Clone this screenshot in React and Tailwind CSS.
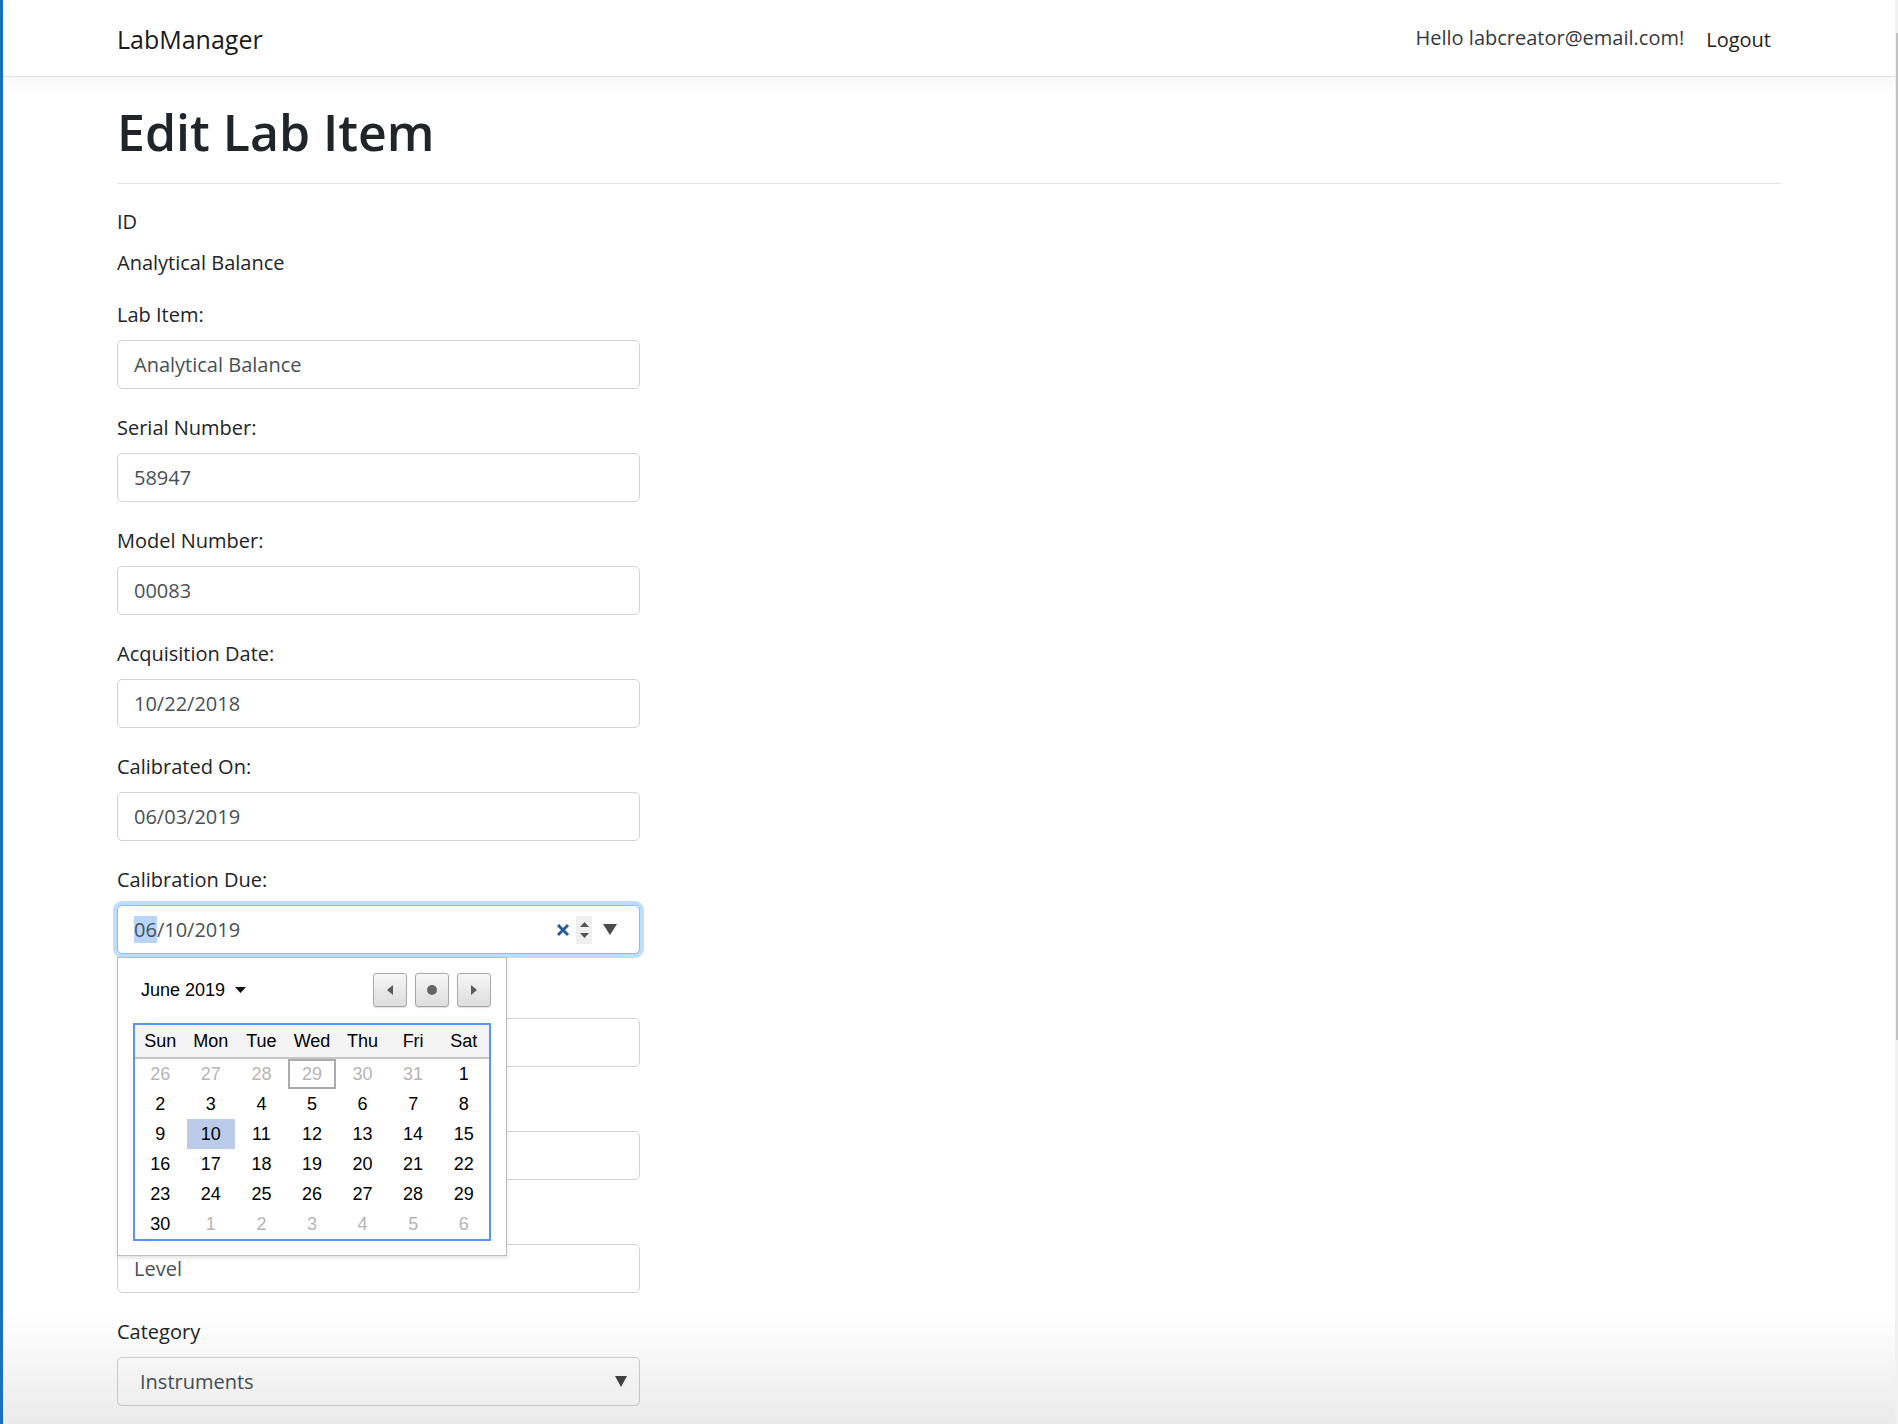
import React from "react";

const dayNames = ["Sun", "Mon", "Tue", "Wed", "Thu", "Fri", "Sat"];

const buildDays = () => {
  const days = [];
  [26, 27, 28, 29, 30, 31].forEach((d) => days.push({ d, muted: true, boxed: d === 29 }));
  for (let d = 1; d <= 30; d++) days.push({ d, muted: false, selected: d === 10 });
  [1, 2, 3, 4, 5, 6].forEach((d) => days.push({ d, muted: true }));
  return days;
};

// labels/values that sit under the open date popup are not visible, so they stay empty
const FormGroup = ({ label, value, children }) => (
  <div className="mb-[24px]">
    <label className="block h-[30px] text-[20px] leading-[30px] mb-[10px]">{label}</label>
    {children || (
      <div className="flex h-[49px] w-[523px] items-center rounded-[5px] border border-[#ced4da] bg-white px-[16px] text-[20px] text-[#495057]">
        {value}
      </div>
    )}
  </div>
);

const NavButton = ({ children }) => (
  <button className="flex h-[34px] w-[34px] items-center justify-center rounded-[3px] border border-[#a8a8a8] bg-linear-to-b from-[#f7f7f7] to-[#dddddd] shadow-[0_1px_1px_rgba(0,0,0,0.12)]">
    {children}
  </button>
);

const DatePopup = () => {
  const days = buildDays();
  return (
    <div className="absolute left-0 top-[52px] z-10 w-[390px] border border-[#bdbdbd] bg-white px-[15px] pt-[15px] pb-[14px] font-['Liberation_Sans',Arial,sans-serif] text-black shadow-[0_2px_4px_rgba(0,0,0,0.12)]">
      <div className="flex h-[34px] items-center justify-between">
        <div className="flex items-center gap-[10px] pl-[8px] text-[18px]">
          June 2019
          <svg width="11" height="6" viewBox="0 0 11 6">
            <path d="M0 0 H11 L5.5 6 Z" fill="#111" />
          </svg>
        </div>
        <div className="flex gap-[8px]">
          <NavButton>
            <svg width="6" height="10" viewBox="0 0 6 10">
              <path d="M6 0 V10 L0 5 Z" fill="#5c5c5c" />
            </svg>
          </NavButton>
          <NavButton>
            <span className="block h-[10px] w-[10px] rounded-full bg-[#666]" />
          </NavButton>
          <NavButton>
            <svg width="6" height="10" viewBox="0 0 6 10">
              <path d="M0 0 V10 L6 5 Z" fill="#5c5c5c" />
            </svg>
          </NavButton>
        </div>
      </div>
      <div className="mt-[16px] border-2 border-[#5b93f5]">
        <div className="grid h-[34px] grid-cols-7 items-center border-b-2 border-[#c6c6c6] bg-[#f4f4f4] text-center text-[18px]">
          {dayNames.map((n) => (
            <span key={n}>{n}</span>
          ))}
        </div>
        <div className="grid grid-cols-7 text-center text-[18px]">
          {days.map((day, i) => (
            <div key={i} className="flex h-[30px] items-center justify-center px-[1px]">
              <span
                className={
                  "flex h-full w-full items-center justify-center " +
                  (day.muted ? "text-[#b5b5b5] " : "text-black ") +
                  (day.selected ? "bg-[#bccbe9] " : "") +
                  (day.boxed ? "border-2 border-[#ababab] " : "")
                }
              >
                {day.d}
              </span>
            </div>
          ))}
        </div>
      </div>
    </div>
  );
};

const App = () => {
  return (
    <div className="flex min-h-[1424px] bg-white font-['Open_Sans',sans-serif] text-[#212529]">
      <div className="w-[3px] shrink-0 bg-[#1b6fc4]" />

      <div className="flex-1">
        <nav className="flex h-[77px] items-center justify-between border-b border-[#dee2e6] bg-white px-[114px] shadow-[0_5px_15px_rgba(0,0,0,0.05)]">
          <a className="pt-[4px] text-[25px] text-[#1a1a1a]">LabManager</a>
          <div className="flex items-center">
            <span className="text-[20px] text-[#343a40]">Hello labcreator@email.com!</span>
            <a className="ml-[22px] pt-[4px] pr-[10px] text-[20px] text-[#222]">Logout</a>
          </div>
        </nav>

        <main className="px-[114px] pt-[25px]">
          <h1 className="h-[60px] text-[50px] font-semibold leading-[60px]">Edit Lab Item</h1>
          <hr className="mt-[21px] border-t border-[#e5e5e5]" />

          <div className="mt-[23px] h-[30px] text-[20px] leading-[30px]">ID</div>
          <div className="mt-[11px] mb-[22px] h-[30px] text-[20px] leading-[30px]">Analytical Balance</div>

          <div className="w-[523px]">
            <FormGroup label="Lab Item:" value="Analytical Balance" />
            <FormGroup label="Serial Number:" value="58947" />
            <FormGroup label="Model Number:" value="00083" />
            <FormGroup label="Acquisition Date:" value="10/22/2018" />
            <FormGroup label="Calibrated On:" value="06/03/2019" />
            <FormGroup label="Calibration Due:">
              <div className="relative">
                <div className="flex h-[49px] w-[523px] items-center rounded-[5px] border border-[#80bdff] bg-white pl-[16px] pr-[22px] text-[20px] text-[#495057] shadow-[0_0_0_4px_rgba(0,123,255,0.25)]">
                  <span className="flex-1 leading-[27px]">
                    <span className="bg-[#b8d5f8]">06</span>/10/2019
                  </span>
                  <svg width="14" height="14" viewBox="0 0 14 14" className="mr-[6px]">
                    <path d="M2 2 L12 12 M12 2 L2 12" stroke="#2c5b9c" strokeWidth="3" />
                  </svg>
                  <div className="flex h-[28px] w-[16px] flex-col items-center justify-center gap-[6px] bg-[#efefef]">
                    <svg width="9" height="5" viewBox="0 0 9 5">
                      <path d="M0 5 H9 L4.5 0 Z" fill="#555" />
                    </svg>
                    <svg width="9" height="5" viewBox="0 0 9 5">
                      <path d="M0 0 H9 L4.5 5 Z" fill="#555" />
                    </svg>
                  </div>
                  <svg width="14" height="11" viewBox="0 0 14 11" className="ml-[11px]">
                    <path d="M0 0 H14 L7 11 Z" fill="#4a4a4a" />
                  </svg>
                </div>
                <DatePopup />
              </div>
            </FormGroup>
            <FormGroup label="" value="" />
            <FormGroup label="" value="" />
            <FormGroup label="" value="Level" />
            <FormGroup label="Category">
              <div className="flex h-[49px] w-[523px] items-center justify-between rounded-[5px] border border-[#ced4da] bg-white pl-[22px] pr-[12px] text-[20px] text-[#495057]">
                <span>Instruments</span>
                <svg width="12" height="11" viewBox="0 0 12 11">
                  <path d="M0 0 H12 L6 11 Z" fill="#444" />
                </svg>
              </div>
            </FormGroup>
          </div>
        </main>
      </div>

      <div className="w-[3px] shrink-0 bg-[#f0f0f0] pt-[33px]">
        <div className="ml-auto h-[1007px] w-[2px] bg-[#c2c2c2]" />
      </div>

      <div className="pointer-events-none fixed bottom-0 left-[3px] right-[3px] h-[110px] bg-linear-to-b from-transparent to-black/[0.08]" />
    </div>
  );
};

export default App;
